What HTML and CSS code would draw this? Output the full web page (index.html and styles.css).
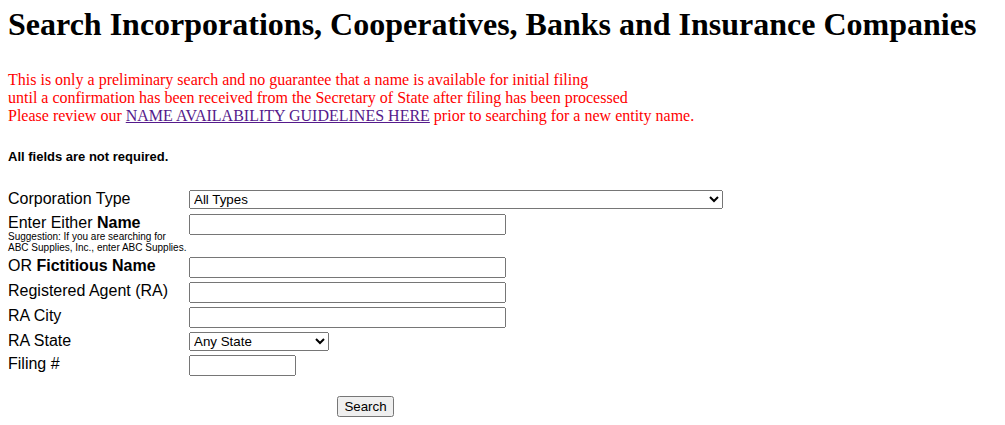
FILE: index.html
```html
<!DOCTYPE html>
<html>
<head>
<meta charset="utf-8">
<title>Search Incorporations</title>
<link rel="stylesheet" href="styles.css">
</head>
<body>
<div class="page">
  <h1 class="title">Search Incorporations, Cooperatives, Banks and Insurance Companies</h1>
  <p class="notice">This is only a preliminary search and no guarantee that a name is available for initial filing<br>
  until a confirmation has been received from the Secretary of State after filing has been processed<br>
  Please review our <a href="#" class="guide-link">NAME AVAILABILITY GUIDELINES HERE</a> prior to searching for a new entity name.</p>
  <p class="required">All fields are not required.</p>
  <form class="search-form">
    <label class="field-label">Corporation Type</label>
    <select class="ctl select-wide"><option>All Types</option></select>

    <div class="field-label name-label">
      <div class="name-line">Enter Either <b>Name</b></div>
      <div class="hint">Suggestion: If you are searching for<br>ABC Supplies, Inc., enter ABC Supplies.</div>
    </div>
    <input type="text" class="ctl input-med name-input">

    <label class="field-label">OR <b>Fictitious Name</b></label>
    <input type="text" class="ctl input-med">

    <label class="field-label">Registered Agent (RA)</label>
    <input type="text" class="ctl input-med">

    <label class="field-label">RA City</label>
    <input type="text" class="ctl input-med">

    <label class="field-label">RA State</label>
    <select class="ctl select-state"><option>Any State</option></select>

    <label class="field-label">Filing #</label>
    <input type="text" class="ctl input-short">

    <button type="button" class="ctl search-btn">Search</button>
  </form>
</div>
</body>
</html>
```
FILE: styles.css
```css
html, body {
  margin: 0;
  padding: 0;
  background: #ffffff;
}
.page {
  padding: 6px 8px 0 8px;
}
.title {
  margin: 0;
  font-family: "Liberation Serif", "Times New Roman", serif;
  font-size: 32px;
  font-weight: bold;
  line-height: normal;
  color: #000;
}
.notice {
  margin: 28px 0 0 0;
  font-family: "Liberation Serif", "Times New Roman", serif;
  font-size: 16px;
  line-height: normal;
  color: #ff0000;
}
.guide-link {
  color: #551a8b;
}
.required {
  margin: 24px 0 0 0;
  font-family: "Liberation Sans", Arial, sans-serif;
  font-size: 13px;
  font-weight: bold;
  line-height: normal;
  color: #000;
}
.search-form {
  margin-top: 26px;
  display: grid;
  grid-template-columns: 181px 534px;
  row-gap: 4px;
  align-items: start;
  font-family: "Liberation Sans", Arial, sans-serif;
  font-size: 16px;
  color: #000;
}
.field-label {
  line-height: normal;
}
.name-label {
  margin-top: 1px;
}
.name-line {
  line-height: 17px;
}
.hint {
  font-size: 10px;
  line-height: 11px;
}
.ctl {
  font-family: "Liberation Sans", Arial, sans-serif;
  font-size: 13.333px;
  box-sizing: border-box;
  margin: 0;
}
.name-input {
  margin-top: 1px;
}
.select-wide {
  width: 534px;
  height: 19px;
}
.select-state {
  width: 140px;
  height: 19px;
}
.input-med {
  width: 317px;
  height: 21px;
}
.input-short {
  width: 107px;
  height: 21px;
}
.search-btn {
  grid-column: 1 / -1;
  justify-self: center;
  margin-top: 16px;
  height: 21px;
  padding: 1px 5px;
}
```
